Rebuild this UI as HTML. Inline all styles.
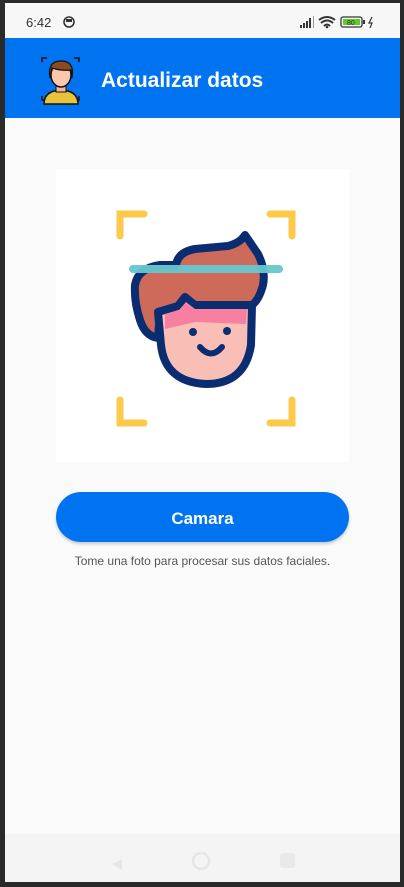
<!DOCTYPE html>
<html><head><meta charset="utf-8"><style>
*{margin:0;padding:0;box-sizing:border-box}
body{width:404px;height:887px;background:#2a2a2a;position:relative;overflow:hidden;font-family:"Liberation Sans",sans-serif}
#scr{position:absolute;left:5px;top:3px;width:395px;height:879px;background:#fafafa;overflow:hidden}
#sb{position:absolute;left:0;top:0;width:395px;height:35px;background:#f7f7f7}
#hd{position:absolute;left:0;top:35px;width:395px;height:80px;background:#0074f0}
#hd .t{position:absolute;left:96px;top:31px;color:#fff;font-weight:bold;font-size:21px}
#box{position:absolute;left:51px;top:166px;width:293px;height:293px;background:#fff}
#btn{position:absolute;left:51px;top:489px;width:293px;height:50px;border-radius:25px;background:#0074f0;color:#fff;font-weight:bold;font-size:17px;text-align:center;line-height:53px;box-shadow:0 2px 3px rgba(0,0,0,.2)}
#tx{position:absolute;left:0;width:395px;top:551px;text-align:center;font-size:12px;color:#555}
#nav{position:absolute;left:0;top:831px;width:395px;height:48px;background:#f4f4f4}
</style></head><body>
<div id="scr">
<div id="sb">
<span style="position:absolute;left:21px;top:12px;font-size:13px;color:#333">6:42</span>
<svg style="position:absolute;left:58px;top:13px" width="12" height="12"><circle cx="6" cy="6" r="5" fill="none" stroke="#333" stroke-width="1.6"/><rect x="3" y="3" width="6" height="3" fill="#333"/></svg>
<svg style="position:absolute;left:295px;top:12px" width="90" height="14">
<rect x="0" y="10" width="2" height="3" fill="#333"/><rect x="3" y="8" width="2" height="5" fill="#333"/><rect x="6" y="6" width="2" height="7" fill="#333"/><rect x="9" y="3" width="2" height="10" fill="#333"/><rect x="13" y="1" width="1" height="12" fill="#999"/>
<path d="M19 5 Q27 -1 35 5 M21 8 Q27 3 33 8 M24 11 Q27 8 30 11" stroke="#333" stroke-width="2" fill="none"/><circle cx="27" cy="12" r="1.3" fill="#333"/>
<rect x="41" y="2" width="21" height="10" rx="2" fill="none" stroke="#333" stroke-width="1.3"/><rect x="43" y="4" width="17" height="6" fill="#5ecb2a"/><text x="47" y="10" font-size="7" fill="#333">80</text><rect x="63" y="5" width="2" height="4" fill="#333"/>
<path d="M72 2 L69 8 L72 8 L70 13" stroke="#333" stroke-width="1.2" fill="none"/>
</svg>
</div>
<div id="hd">
<svg style="position:absolute;left:36px;top:18px" width="40" height="50" viewBox="0 0 40 50">
<g stroke="#111" stroke-width="1.5" fill="none"><path d="M1 6V2H6M33 2H38V6M1 40V44H4M38 40V44H35"/></g>
<path d="M3 48 Q3 38 13 35 L27 35 Q37 38 37 48Z" fill="#e8c43a" stroke="#111" stroke-width="1.5"/>
<rect x="15" y="29" width="10" height="7" fill="#f5b79a" stroke="#111" stroke-width="1"/>
<ellipse cx="20" cy="19" rx="10" ry="12" fill="#fbc7ad" stroke="#111" stroke-width="1.5"/>
<path d="M9 22 Q6 5 20 5 Q34 5 31 22 L30 14 Q20 15 11 12Z" fill="#8b4a1f" stroke="#111" stroke-width="1.2"/>
</svg>
<div class="t">Actualizar datos</div>
</div>
<div id="box"></div>
<svg style="position:absolute;left:-5px;top:-3px" width="404" height="887">
<g stroke="#fcc94a" stroke-width="7" stroke-linecap="round" fill="none">
<path d="M120 236V214H144M270 214H292V236M120 400V423H144M270 423H292V400"/>
</g>
<path d="M245 235 L258 254 Q266 270 263 285 Q259 300 252 305 L160 312 L158 338 Q145 336 140 320 Q134 302 135 285 Q138 268 160 265 L176 265 Q178 252 195 249 L228 246 Q240 243 245 235Z" fill="#cd6a5a" stroke="#0a2d72" stroke-width="8" stroke-linejoin="round"/>
<path d="M158 312 L178 306 L185 297 L195 305 L252 305 L251 345 Q245 384 206 384 Q165 382 161 345Z" fill="#f9beb6" stroke="#0a2d72" stroke-width="8" stroke-linejoin="round"/>
<path d="M165 314 L179 310 L186 302 L195 309 L247 309 L246 324 L195 322 L165 329Z" fill="#f77fa0"/>
<circle cx="193" cy="332" r="4" fill="#0a2d72"/><circle cx="227" cy="331" r="4" fill="#0a2d72"/>
<path d="M200 347 Q211 360 222 347" stroke="#0a2d72" stroke-width="6" fill="none" stroke-linecap="round"/>
<path d="M133 269H279" stroke="#66c8cf" stroke-width="8" stroke-linecap="round" opacity=".95"/>
</svg>
<div id="btn">Camara</div>
<div id="tx">Tome una foto para procesar sus datos faciales.</div>
<div id="nav">
<svg width="395" height="48"><path d="M117 25 L107 30 L117 36Z" fill="#e6e6e6"/><circle cx="196" cy="27" r="8" fill="none" stroke="#e6e6e6" stroke-width="2.5"/><rect x="275" y="19" width="15" height="15" rx="3" fill="#e9e9e9"/></svg>
</div>
</div>
</body></html>
